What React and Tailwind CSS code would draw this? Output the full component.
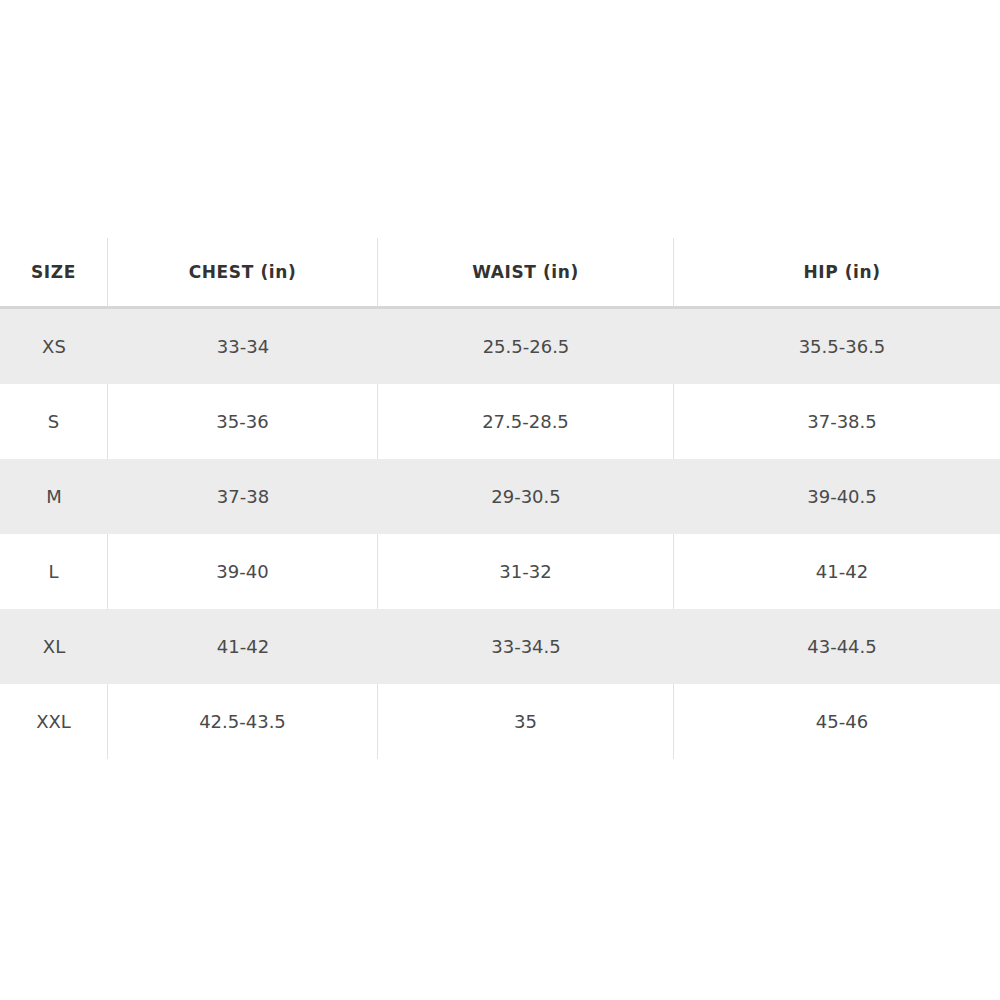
import React from "react";

const rows = [
  ["XS", "33-34", "25.5-26.5", "35.5-36.5"],
  ["S", "35-36", "27.5-28.5", "37-38.5"],
  ["M", "37-38", "29-30.5", "39-40.5"],
  ["L", "39-40", "31-32", "41-42"],
  ["XL", "41-42", "33-34.5", "43-44.5"],
  ["XXL", "42.5-43.5", "35", "45-46"],
];

export default function App() {
  return (
    <div className="w-[1000px] h-[1000px] bg-white overflow-hidden" style={{ fontFamily: '"DejaVu Sans", "Open Sans", sans-serif' }}>
      <div className="pt-[238px]">
        <div className="grid grid-cols-[108px_270px_296px_326px] h-[68px] text-[17px] font-bold text-[#333] tracking-[0.6px]">
          <div className="flex items-center justify-center pt-[1px] border-r border-[#e2e2e2]">SIZE</div>
          <div className="flex items-center justify-center pt-[1px] border-r border-[#e2e2e2]">CHEST (in)</div>
          <div className="flex items-center justify-center pt-[1px] border-r border-[#e2e2e2]">WAIST (in)</div>
          <div className="flex items-center justify-center pt-[1px] pl-[10px]">HIP (in)</div>
        </div>
        <div className="h-[3px] bg-[#d6d6d6]" />
        {rows.map((r, i) => {
          const gray = i % 2 === 0;
          const border = gray ? "" : "border-r border-[#e2e2e2]";
          return (
            <div
              key={r[0]}
              className={`grid grid-cols-[108px_270px_296px_326px] h-[75px] text-[18px] text-[#4a4a4a] ${gray ? "bg-[#ececec]" : "bg-white"}`}
            >
              <div className={`flex items-center justify-center ${border}`}>{r[0]}</div>
              <div className={`flex items-center justify-center ${border}`}>{r[1]}</div>
              <div className={`flex items-center justify-center ${border}`}>{r[2]}</div>
              <div className="flex items-center justify-center pl-[10px]">{r[3]}</div>
            </div>
          );
        })}
      </div>
    </div>
  );
}
